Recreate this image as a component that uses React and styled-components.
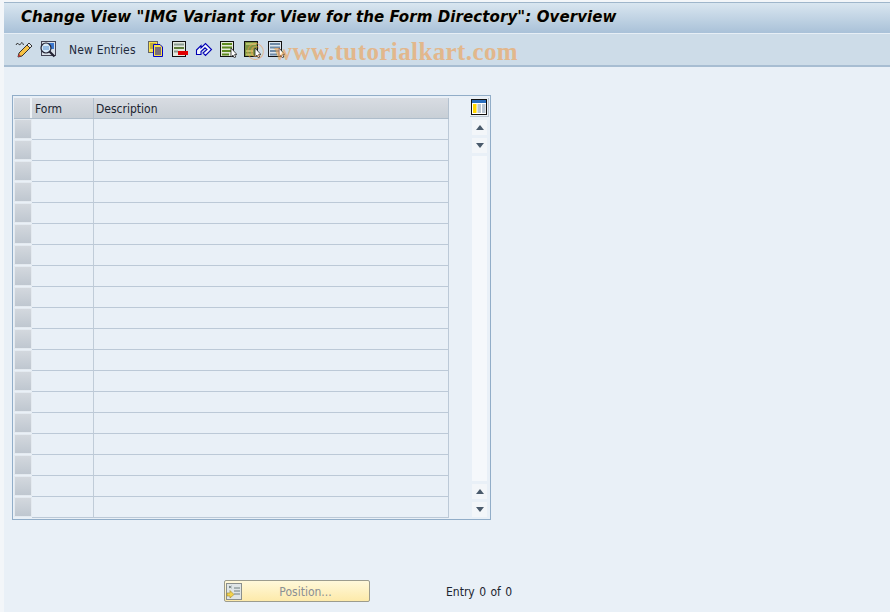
import React from "react";
import styled, { createGlobalStyle } from "styled-components";

const GlobalStyles = createGlobalStyle`
  html, body { margin: 0; padding: 0; height: 100%; }
  body { background: #e9f0f7; font-family: "DejaVu Sans Condensed", "DejaVu Sans", sans-serif; overflow: hidden; }
`;

const ROWS = Array.from({ length: 19 }, (_, i) => i);

const Frame = (p) => <svg width="18" height="18" viewBox="0 0 18 18" {...p} />;

const Cursor = () => (
  <path d="M12 8 V17 L14 15.2 L15.3 17.8 L16.8 17 L15.6 14.6 H18 Z" fill="#fff" stroke="#222" strokeWidth="0.8" />
);

const ToolIcons = {
  edit: (
    <Frame>
      <path d="M1 5 Q2 2 3.5 4 T6 3.5 T8.5 5" fill="none" stroke="#333" strokeWidth="1" />
      <path d="M4 13 L12 5 L15 8 L7 16 L3 17 Z" fill="#f6c143" stroke="#333" strokeWidth="1" />
      <path d="M12 5 L14 3 L17 6 L15 8 Z" fill="#e8e8e8" stroke="#333" strokeWidth="1" />
      <path d="M3 17 L4 14 L6 16 Z" fill="#c33" />
    </Frame>
  ),
  display: (
    <Frame>
      <rect x="2.5" y="1.5" width="14" height="14" fill="#d8e0e8" stroke="#445" />
      <path d="M7 3 H15 V9 H10 Z" fill="#3a78d0" />
      <circle cx="7" cy="8" r="5" fill="#d6e8f6" stroke="#223" strokeWidth="1.2" />
      <path d="M4 7 H10 M4 9 H10" stroke="#5b93d3" />
      <path d="M10.5 11.5 L15.5 16.5" stroke="#223" strokeWidth="2.2" />
    </Frame>
  ),
  copy: (
    <Frame>
      <rect x="1.5" y="1.5" width="9" height="11" fill="#f8e04e" stroke="#666" />
      <path d="M3 4 H9 M3 6 H9 M3 8 H6" stroke="#8a7a20" />
      <path d="M6.5 4.5 H13 L15.5 7 V16.5 H6.5 Z" fill="#f8e04e" stroke="#0000c8" />
      <path d="M8 8 H14 M8 10 H14 M8 12 H14 M8 14 H14" stroke="#0000a0" />
    </Frame>
  ),
  remove: (
    <Frame>
      <rect x="1.5" y="1.5" width="13" height="15" fill="#e4e9e0" stroke="#111" />
      <path d="M3 4.5 H13" stroke="#8a9a90" strokeWidth="2" />
      <path d="M3 8 H13" stroke="#5e7d3a" strokeWidth="2" />
      <path d="M3 11.5 H7" stroke="#8a9a90" strokeWidth="2" />
      <rect x="7" y="11" width="10" height="4" fill="#e00000" />
    </Frame>
  ),
  undo: (
    <Frame>
      <path d="M1.5 10 L6 5.5 V8 L10.5 3.5 L16.5 9.5 L10.5 15.5 L8 13 L12 9.5 L10 7.8 L6 11.5 V14.5 H1.5 Z" fill="#f2f6fc" stroke="#0000b4" strokeWidth="1.1" />
    </Frame>
  ),
  selectAll: (
    <Frame>
      <rect x="1.5" y="1.5" width="13" height="15" fill="#e4e9d8" stroke="#111" />
      <path d="M3 4 H13 M3 7.5 H13 M3 11 H13 M3 14.5 H10" stroke="#5e8a20" strokeWidth="2" />
      <Cursor />
    </Frame>
  ),
  selectBlock: (
    <Frame>
      <rect x="1.5" y="1.5" width="13" height="15" fill="#7d9442" stroke="#111" />
      <path d="M3 4 H13 M3 11 H10 M3 14.5 H10" stroke="#b6c36e" strokeWidth="2" />
      <Cursor />
    </Frame>
  ),
  deselect: (
    <Frame>
      <rect x="1.5" y="1.5" width="13" height="15" fill="#dde6ee" stroke="#111" />
      <path d="M3 4 H13 M3 7.5 H13 M3 11 H13 M3 14.5 H10" stroke="#6f8aa6" strokeWidth="2" />
      <Cursor />
    </Frame>
  ),
};

const App = () => {
  return (
    <Wrapper>
      <GlobalStyles />
      <TitleBar>
        <Title>Change View "IMG Variant for View for the Form Directory": Overview</Title>
      </TitleBar>
      <Toolbar>
        <IconGroup>
          <ToolIcon>{ToolIcons.edit}</ToolIcon>
          <ToolIcon>{ToolIcons.display}</ToolIcon>
        </IconGroup>
        <ToolText>New Entries</ToolText>
        <IconGroup>
          <ToolIcon>{ToolIcons.copy}</ToolIcon>
          <ToolIcon>{ToolIcons.remove}</ToolIcon>
          <ToolIcon>{ToolIcons.undo}</ToolIcon>
          <ToolIcon>{ToolIcons.selectAll}</ToolIcon>
          <ToolIcon>{ToolIcons.selectBlock}</ToolIcon>
          <ToolIcon>{ToolIcons.deselect}</ToolIcon>
        </IconGroup>
        <Watermark>
          <WatermarkSeal>©</WatermarkSeal>www.tutorialkart.com
        </Watermark>
      </Toolbar>
      <Content>
        <TableFrame>
          <TableMain>
            <HeaderRow>
              <CornerCell />
              <FormHead>Form</FormHead>
              <DescHead>Description</DescHead>
            </HeaderRow>
            {ROWS.map((r) => (
              <Row key={r}>
                <Selector />
                <FormCell />
                <DescCell />
              </Row>
            ))}
          </TableMain>
          <ScrollColumn>
            <ConfigButton>
              <svg width="16" height="16" viewBox="0 0 16 16">
                <rect x="0.5" y="0.5" width="15" height="15" fill="#fff" stroke="#111" />
                <rect x="1" y="1" width="14" height="3" fill="#2a6fc0" />
                <rect x="2" y="5" width="3.5" height="9" fill="#ffd800" />
                <rect x="6.5" y="5" width="3.5" height="9" fill="#b9c6d3" />
                <rect x="11" y="5" width="3.5" height="9" fill="#b9c6d3" />
              </svg>
            </ConfigButton>
            <ScrollButton><ArrowUp /></ScrollButton>
            <ScrollButton><ArrowDown /></ScrollButton>
            <ScrollTrack />
            <ScrollButton><ArrowUp /></ScrollButton>
            <ScrollButton><ArrowDown /></ScrollButton>
          </ScrollColumn>
        </TableFrame>
        <Footer>
          <PositionButton>
            <ButtonIcon>
              <svg width="16" height="17" viewBox="0 0 16 17">
                <rect x="0.5" y="0.5" width="15" height="16" fill="#dfe5e6" stroke="#8a8f8c" />
                <path d="M8 5 H14 M8 8 H14 M8 11 H14" stroke="#6f7f7f" />
                <path d="M3 3 L5.5 5 M5.5 3 L3 5" stroke="#6f7f7f" />
                <path d="M1 10 H4 V7.5 L8 11.5 L4 15 V13 H1 Z" fill="#f4d34c" stroke="#a08a30" strokeWidth="0.6" />
              </svg>
            </ButtonIcon>
            <ButtonLabel>Position...</ButtonLabel>
          </PositionButton>
          <EntryText>Entry 0 of 0</EntryText>
        </Footer>
      </Content>
    </Wrapper>
  );
};

const Wrapper = styled.div`
  display: flex;
  flex-direction: column;
  width: 890px;
  height: 612px;
  padding: 2px 0 0 4px;
  box-sizing: border-box;
  background: #e9f0f7;
  box-shadow: inset 4px 2px 0 #f3f6f9;
`;

const TitleBar = styled.div`
  display: flex;
  align-items: center;
  height: 31px;
  padding: 0 0 3px 17px;
  background: linear-gradient(#d9e6f0, #a9c1d8);
  border-top: 1px solid #9fb6cb;
  box-sizing: border-box;
`;

const Title = styled.h1`
  margin: 0;
  font-family: "DejaVu Sans", Verdana, sans-serif;
  font-size: 15px;
  font-style: italic;
  font-weight: 700;
  letter-spacing: 0.1px;
  color: #000;
  white-space: nowrap;
  text-shadow: 0 0 1px #f0d9a0;
`;

const Toolbar = styled.div`
  position: relative;
  display: flex;
  align-items: center;
  height: 34px;
  padding: 0 0 2px 11px;
  box-sizing: border-box;
  background: #cddce8;
  border-top: 1px solid #e6eef5;
  border-bottom: 2px solid #a7bdd2;
`;

const IconGroup = styled.div`
  display: flex;
  align-items: center;
  gap: 6px;
`;

const ToolIcon = styled.span`
  display: flex;
  width: 18px;
  height: 18px;
`;

const ToolText = styled.span`
  margin: 2px 12px 0 12px;
  width: 66px;
  font-size: 12px;
  letter-spacing: 0.2px;
  color: #1e2a3c;
  white-space: nowrap;
`;

const Watermark = styled.div`
  position: absolute;
  left: 270px;
  top: 4px;
  font-family: "Liberation Serif", serif;
  font-size: 25px;
  font-weight: 700;
  letter-spacing: 0.4px;
  color: #f0a050;
  opacity: 0.6;
  white-space: nowrap;
`;

const WatermarkSeal = styled.span`
  position: absolute;
  left: -28px;
  top: 0;
  font-weight: 400;
`;

const Content = styled.div`
  display: flex;
  flex-direction: column;
  align-items: flex-start;
  padding: 28px 0 0 8px;
`;

const TableFrame = styled.div`
  display: flex;
  width: 479px;
  height: 425px;
  box-sizing: border-box;
  padding: 2px 0 0 1px;
  border: 1px solid #91adc8;
`;

const TableMain = styled.div`
  display: flex;
  flex-direction: column;
  width: 435px;
`;

const HeaderRow = styled.div`
  display: flex;
  height: 21px;
  background: linear-gradient(#d8dce2, #c8cfd6);
  border-bottom: 1px solid #aebdcb;
  box-sizing: border-box;
`;

const CornerCell = styled.div`
  width: 18px;
  border-right: 2px solid #eef2f6;
  box-sizing: border-box;
`;

const HeadCell = styled.div`
  display: flex;
  align-items: center;
  padding: 2px 0 0 3px;
  font-size: 12px;
  color: #1b2430;
  border-right: 1px solid #b3c1cf;
  box-sizing: border-box;
`;

const FormHead = styled(HeadCell)`
  width: 62px;
`;

const DescHead = styled(HeadCell)`
  width: 355px;
  padding-left: 2px;
`;

const Row = styled.div`
  display: flex;
  height: 21px;
  box-sizing: border-box;
`;

const Selector = styled.div`
  flex: none;
  width: 18px;
  height: 20px;
  background: linear-gradient(#d3d8de, #bfc7d0);
  border: 1px solid #e4eaf0;
  box-sizing: border-box;
`;

const FormCell = styled.div`
  width: 62px;
  border-right: 1px solid #c0ccd8;
  border-bottom: 1px solid #bcc9d7;
  box-sizing: border-box;
`;

const DescCell = styled.div`
  width: 355px;
  border-right: 1px solid #bcc9d7;
  border-bottom: 1px solid #bcc9d7;
  box-sizing: border-box;
`;

const ScrollColumn = styled.div`
  display: flex;
  flex-direction: column;
  align-items: center;
  width: 40px;
  padding-left: 21px;
  gap: 3px;
  box-sizing: border-box;
`;

const ConfigButton = styled.div`
  display: flex;
  align-items: center;
  justify-content: center;
  width: 19px;
  height: 19px;
  box-sizing: border-box;
  border-right: 1px solid #b8c4d0;
  border-bottom: 1px solid #b8c4d0;
`;

const ScrollButton = styled.div`
  display: flex;
  align-items: center;
  justify-content: center;
  width: 15px;
  height: 15px;
  background: #f3f6f9;
`;

const ScrollTrack = styled.div`
  width: 15px;
  height: 325px;
  background: #f5f8fb;
`;

const ArrowUp = styled.div`
  width: 0;
  height: 0;
  border-left: 4px solid transparent;
  border-right: 4px solid transparent;
  border-bottom: 5px solid #4a5a6b;
`;

const ArrowDown = styled.div`
  width: 0;
  height: 0;
  border-left: 4px solid transparent;
  border-right: 4px solid transparent;
  border-top: 5px solid #4a5a6b;
`;

const Footer = styled.div`
  display: flex;
  align-items: center;
  margin-top: 60px;
  padding-left: 212px;
`;

const PositionButton = styled.div`
  display: flex;
  align-items: center;
  width: 146px;
  height: 22px;
  box-sizing: border-box;
  padding-left: 1px;
  background: linear-gradient(#fff8da, #fdeaaa);
  border: 1px solid #9c9c8e;
  border-radius: 2px;
`;

const ButtonIcon = styled.span`
  display: flex;
  width: 16px;
`;

const ButtonLabel = styled.span`
  flex: 1;
  padding-top: 2px;
  text-align: center;
  font-size: 12px;
  color: #8b8f94;
`;

const EntryText = styled.span`
  margin-left: 76px;
  padding-top: 2px;
  font-size: 12px;
  word-spacing: 1px;
  color: #1b2430;
`;

export default App;
